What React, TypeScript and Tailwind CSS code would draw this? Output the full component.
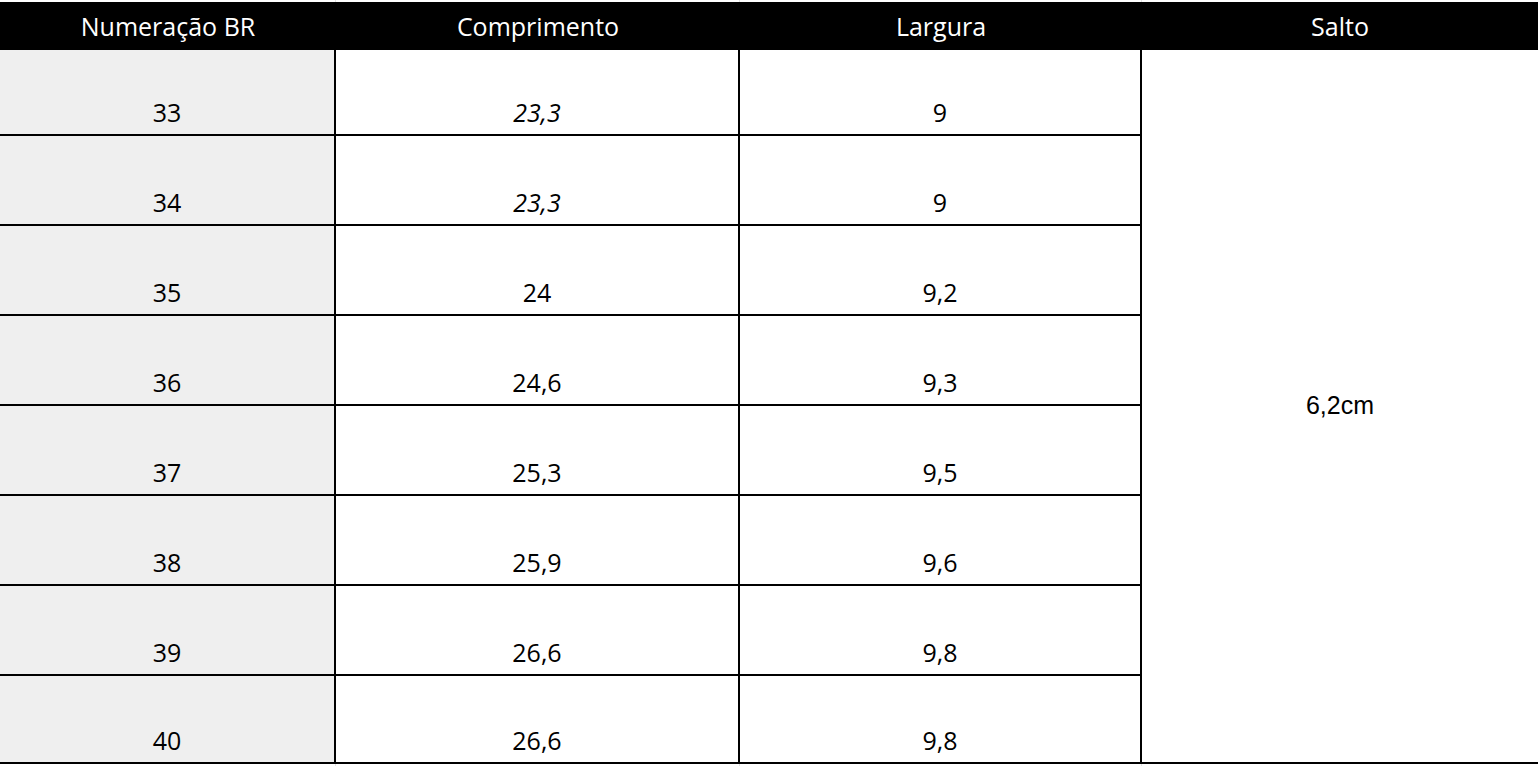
const rows = [
  { br: '33', len: '23,3', width: '9', italic: true },
  { br: '34', len: '23,3', width: '9', italic: true },
  { br: '35', len: '24', width: '9,2' },
  { br: '36', len: '24,6', width: '9,3' },
  { br: '37', len: '25,3', width: '9,5' },
  { br: '38', len: '25,9', width: '9,6' },
  { br: '39', len: '26,6', width: '9,8' },
  { br: '40', len: '26,6', width: '9,8' },
];

const cols = 'grid grid-cols-[336px_404px_402px_1fr]';

function GridStrip() {
  // faint spreadsheet gridlines above and below the table
  return (
    <div className={`${cols} h-[2px] bg-white`}>
      <div className="border-r border-[#e3e3e3]" />
      <div className="border-r border-[#e3e3e3]" />
      <div className="border-r border-[#e3e3e3]" />
      <div />
    </div>
  );
}

export default function App() {
  return (
    <div className="w-[1538px] h-[766px] bg-white overflow-hidden font-['Open_Sans',sans-serif] text-black">
      <GridStrip />

      {/* Header */}
      <div className={`${cols} h-[48px] bg-black text-white text-[25px]`}>
        {['Numeração BR', 'Comprimento', 'Largura', 'Salto'].map((h) => (
          <div key={h} className="flex items-center justify-center leading-none">
            {h}
          </div>
        ))}
      </div>

      {/* Body */}
      <div className={`${cols} grid-rows-[86px_repeat(6,90px)_88px] text-[25px]`}>
        <div className="col-start-4 row-start-1 row-span-8 border-b-2 border-black flex items-center justify-center font-['Liberation_Sans',sans-serif] text-[25px]">
          6,2cm
        </div>
        {rows.map((r) => (
          <div key={r.br} className="contents">
            <div className="bg-[#efefef] border-r-2 border-b-2 border-black flex items-end justify-center pb-[9px] leading-none">
              {r.br}
            </div>
            <div className={`border-r-2 border-b-2 border-black flex items-end justify-center pb-[9px] leading-none ${r.italic ? 'italic' : ''}`}>
              {r.len}
            </div>
            <div className="border-r-2 border-b-2 border-black flex items-end justify-center pb-[9px] leading-none">
              {r.width}
            </div>
          </div>
        ))}
      </div>

      <GridStrip />
    </div>
  );
}
